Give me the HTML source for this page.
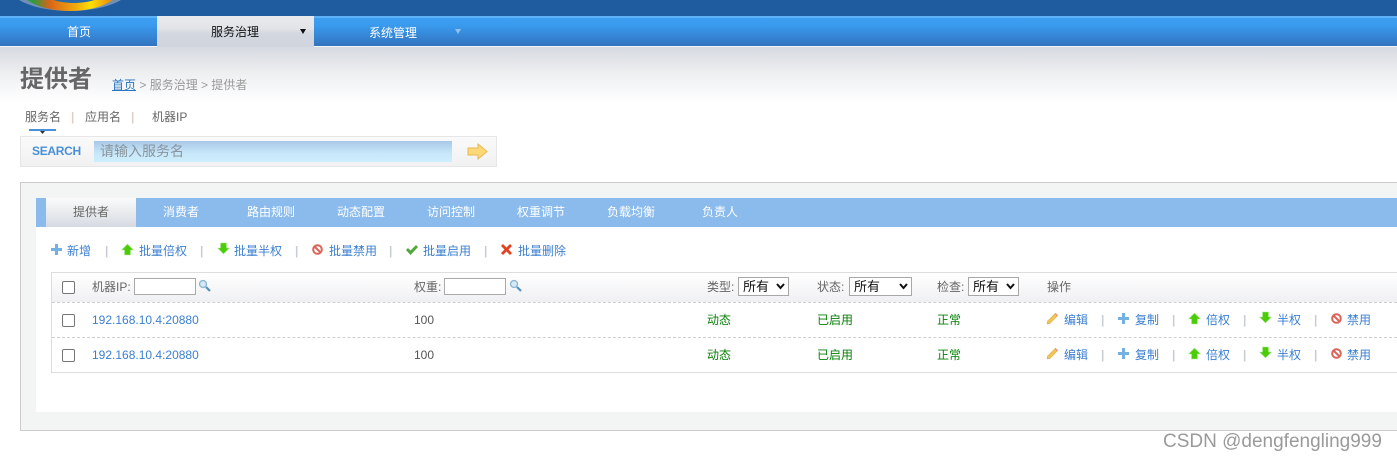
<!DOCTYPE html>
<html><head><meta charset="utf-8">
<style>
*{box-sizing:border-box}
html,body{margin:0;padding:0;width:1397px;height:461px;overflow:hidden;background:#fff}
body{position:relative;font:12px/16px "Liberation Sans","Noto Sans CJK SC",sans-serif;color:#666}
.a{position:absolute}
.t{position:absolute;white-space:nowrap;line-height:16px}
.l{color:#3b7fd0}
.g{color:#088008}
.s{color:#c8ccd4;font-weight:bold}
.h{color:#666}
.i{position:absolute;width:13px;height:13px}
.c{position:absolute;width:13px;height:13px;border:1px solid #767676;border-radius:2px;background:#fff}
.n{position:absolute;height:17px;width:62px;border:1px solid #aaa;background:#fff}
.sel{position:absolute;height:19px;border:1px solid #a8a8a8;background:#fff;color:#111;font-size:13px;line-height:17px;padding-left:4px}
.sel svg{position:absolute;right:3px;top:5px}
.d{position:absolute;left:52px;width:1345px;border-top:1px dashed #cfcfcf}
</style></head><body>
<svg width="0" height="0" style="position:absolute"><defs>
<symbol id="plus" viewBox="0 0 13 13"><path d="M5 1h3v4h4v3H8v4H5V8H1V5h4z" fill="#74b0e0"/></symbol>
<symbol id="up" viewBox="0 0 13 13"><path d="M6.500 1L12.500 7H9.500v5H3.500V7H.5z" fill="#4ccc08" stroke="#b0ec98" stroke-width=".6"/></symbol>
<symbol id="down" viewBox="0 0 13 13"><path d="M3.500 1h6v5h3l-6 6-6-6h3z" fill="#4ccc08" stroke="#b0ec98" stroke-width=".6"/></symbol>
<symbol id="no" viewBox="0 0 13 13"><circle cx="6.500" cy="6.500" r="4.300" fill="#fff" stroke="#d9665a" stroke-width="2"/><path d="M3.500 3.500l6 6" stroke="#d9665a" stroke-width="2"/></symbol>
<symbol id="ok" viewBox="0 0 13 13"><path d="M1 7l2-2 2.500 2.500L11 2l2 2-7.500 8z" fill="#4fa83a"/></symbol>
<symbol id="x" viewBox="0 0 13 13"><path d="M3 1l3.500 3.500L10 1l2 2-3.500 3.500L12 10l-2 2-3.500-3.500L3 12l-2-2 3.500-3.500L1 3z" fill="#e2421f"/></symbol>
<symbol id="pen" viewBox="0 0 13 13"><path d="M9.500 1l2.500 2.500L4 11.500 1 12l.5-3z" fill="#f0c458" stroke="#d8a440" stroke-width=".5"/><path d="M9.500 1l2.500 2.500-1 1L8.500 2z" fill="#e8a090"/></symbol>
<symbol id="mag" viewBox="0 0 13 13"><circle cx="5" cy="5" r="3.500" fill="#d5e8f5" stroke="#8ab4d0" stroke-width="1.300"/><path d="M8 8l4 4" stroke="#4f93c4" stroke-width="2.200"/></symbol>
</defs></svg>

<!-- header -->
<div class="a" style="left:0;top:0;width:1397px;height:16px;background:#1f5c9f"></div>
<div class="a" style="left:8px;top:-40px;width:124px;height:51px;border-radius:50%;background:#6f8fb5"></div>
<div class="a" style="left:18px;top:-40px;width:104px;height:51px;border-radius:50%;background:linear-gradient(90deg,#3a9a40 0,#2f9a3c 15%,#d8641a 30%,#f0a80c 55%,#ffe000 70%,#e88a10 90%,#b8701a 100%)"></div>
<div class="a" style="left:32px;top:-44px;width:84px;height:47px;border-radius:50%;background:#2b6aa8"></div>
<div class="a" style="left:0;top:16px;width:1397px;height:30px;background:linear-gradient(#3d9ff2 0,#3a9bee 25%,#3273bf 100%);border-top:2px solid #5db2f7"></div>
<div class="a" style="left:0;top:46px;width:1397px;height:1px;background:#f4f5f7"></div>
<div class="a" style="left:0;top:47px;width:1397px;height:55px;background:linear-gradient(#d6d9df,#eceef0 45%,#fff)"></div>
<div class="a" style="left:157px;top:16px;width:157px;height:31px;background:linear-gradient(#e9eaed 0,#e2e4e8 40%,#d4d8e0 55%,#cfd4dd 100%)"></div>
<div class="t" style="left:67px;top:24px;color:#fff">首页</div>
<div class="t" style="left:211px;top:24px;color:#111">服务治理</div>
<svg class="a" style="left:300px;top:29px" width="6" height="6"><path d="M0 0h6L3 5z" fill="#111"/></svg>
<div class="t" style="left:369px;top:25px;color:#fff">系统管理</div>
<svg class="a" style="left:455px;top:29px" width="6" height="6"><path d="M0 0h6L3 5z" fill="#8fc0ee"/></svg>

<!-- title -->
<div class="t" style="left:20px;top:66px;font-size:24px;line-height:28px;font-weight:bold;color:#666">提供者</div>
<div class="t" style="left:112px;top:77px;color:#999"><span style="color:#2a76c4;text-decoration:underline">首页</span> &gt; 服务治理 &gt; 提供者</div>

<!-- search tabs -->
<div class="t" style="left:25px;top:109px">服务名</div>
<div class="t s" style="left:71px;top:109px;color:#dccfc8">|</div>
<div class="t" style="left:85px;top:109px">应用名</div>
<div class="t s" style="left:131px;top:109px;color:#dccfc8">|</div>
<div class="t" style="left:152px;top:109px">机器IP</div>
<div class="a" style="left:29px;top:129px;width:27px;height:2px;background:#4a90d9"></div>
<svg class="a" style="left:40px;top:131px" width="5" height="3"><path d="M0 0h5L2.500 3z" fill="#333"/></svg>
<div class="a" style="left:20px;top:136px;width:477px;height:31px;border:1px solid #e6e6e6;background:linear-gradient(#fafafa,#f1f1f1)"></div>
<div class="t" style="left:32px;top:143px;font-weight:bold;color:#4a90d9;letter-spacing:-.3px">SEARCH</div>
<div class="a" style="left:94px;top:141px;width:358px;height:21px;background:linear-gradient(#a8c8e8,#c8e8fa 60%,#cdeefc);padding-left:6px;font-size:14px;line-height:21px;color:#8a949c">请输入服务名</div>
<svg class="a" style="left:467px;top:143px" width="21" height="17"><path d="M1 5h10V1l9 7.500L11 16v-4H1z" fill="#fbd978" stroke="#e8b94f"/></svg>

<!-- panel -->
<div class="a" style="left:20px;top:182px;width:1390px;height:249px;border:1px solid #ccc;background:#f3f4f4"></div>
<div class="a" style="left:36px;top:198px;width:1361px;height:214px;background:#fff"></div>
<div class="a" style="left:36px;top:198px;width:1361px;height:29px;background:#8bbbec"></div>
<div class="a" style="left:46px;top:198px;width:90px;height:29px;background:linear-gradient(#fbfbfb,#d6dae1)"></div>
<div class="t" style="left:73px;top:204px">提供者</div>
<div class="t" style="left:163px;top:204px;color:#fff">消费者</div>
<div class="t" style="left:247px;top:204px;color:#fff">路由规则</div>
<div class="t" style="left:337px;top:204px;color:#fff">动态配置</div>
<div class="t" style="left:427px;top:204px;color:#fff">访问控制</div>
<div class="t" style="left:517px;top:204px;color:#fff">权重调节</div>
<div class="t" style="left:607px;top:204px;color:#fff">负载均衡</div>
<div class="t" style="left:702px;top:204px;color:#fff">负责人</div>

<!-- toolbar -->
<svg class="i" style="left:50px;top:243px"><use href="#plus"/></svg><div class="t l" style="left:67px;top:243px">新增</div><div class="t s" style="left:105px;top:243px">|</div>
<svg class="i" style="left:121px;top:243px"><use href="#up"/></svg><div class="t l" style="left:139px;top:243px">批量倍权</div><div class="t s" style="left:200px;top:243px">|</div>
<svg class="i" style="left:217px;top:242px"><use href="#down"/></svg><div class="t l" style="left:234px;top:243px">批量半权</div><div class="t s" style="left:295px;top:243px">|</div>
<svg class="i" style="left:311px;top:243px"><use href="#no"/></svg><div class="t l" style="left:329px;top:243px">批量禁用</div><div class="t s" style="left:389px;top:243px">|</div>
<svg class="i" style="left:405px;top:243px"><use href="#ok"/></svg><div class="t l" style="left:423px;top:243px">批量启用</div><div class="t s" style="left:484px;top:243px">|</div>
<svg class="i" style="left:500px;top:243px"><use href="#x"/></svg><div class="t l" style="left:518px;top:243px">批量删除</div>

<!-- table -->
<div class="a" style="left:51px;top:272px;width:1360px;height:101px;border:1px solid #ddd;background:#fff"></div>
<div class="a" style="left:52px;top:273px;width:1345px;height:29px;background:linear-gradient(#fff,#eff0f2)"></div>
<div class="d" style="top:302px"></div>
<div class="d" style="top:337px"></div>

<div class="c" style="left:62px;top:281px"></div>
<div class="t h" style="left:92px;top:279px">机器IP:</div>
<div class="n" style="left:134px;top:278px"></div>
<svg class="i" style="left:198px;top:279px"><use href="#mag"/></svg>
<div class="t h" style="left:414px;top:279px">权重:</div>
<div class="n" style="left:444px;top:278px"></div>
<svg class="i" style="left:509px;top:279px"><use href="#mag"/></svg>
<div class="t h" style="left:707px;top:279px">类型:</div>
<div class="sel" style="left:738px;top:277px;width:51px">所有<svg width="9" height="7"><path d="M1 1l3.500 4L8 1" fill="none" stroke="#111" stroke-width="2"/></svg></div>
<div class="t h" style="left:817px;top:279px">状态:</div>
<div class="sel" style="left:849px;top:277px;width:63px">所有<svg width="9" height="7"><path d="M1 1l3.500 4L8 1" fill="none" stroke="#111" stroke-width="2"/></svg></div>
<div class="t h" style="left:937px;top:279px">检查:</div>
<div class="sel" style="left:968px;top:277px;width:51px">所有<svg width="9" height="7"><path d="M1 1l3.500 4L8 1" fill="none" stroke="#111" stroke-width="2"/></svg></div>
<div class="t h" style="left:1047px;top:279px">操作</div>

<!-- row 1 -->
<div class="c" style="left:62px;top:314px"></div>
<div class="t l" style="left:92px;top:312px">192.168.10.4:20880</div>
<div class="t" style="left:414px;top:312px;color:#555">100</div>
<div class="t g" style="left:707px;top:312px">动态</div>
<div class="t g" style="left:817px;top:312px">已启用</div>
<div class="t g" style="left:937px;top:312px">正常</div>
<svg class="i" style="left:1046px;top:312px"><use href="#pen"/></svg><div class="t l" style="left:1064px;top:312px">编辑</div><div class="t s" style="left:1101px;top:312px">|</div>
<svg class="i" style="left:1117px;top:312px"><use href="#plus"/></svg><div class="t l" style="left:1135px;top:312px">复制</div><div class="t s" style="left:1172px;top:312px">|</div>
<svg class="i" style="left:1188px;top:312px"><use href="#up"/></svg><div class="t l" style="left:1206px;top:312px">倍权</div><div class="t s" style="left:1243px;top:312px">|</div>
<svg class="i" style="left:1259px;top:311px"><use href="#down"/></svg><div class="t l" style="left:1277px;top:312px">半权</div><div class="t s" style="left:1314px;top:312px">|</div>
<svg class="i" style="left:1330px;top:312px"><use href="#no"/></svg><div class="t l" style="left:1347px;top:312px">禁用</div>

<!-- row 2 -->
<div class="c" style="left:62px;top:349px"></div>
<div class="t l" style="left:92px;top:347px">192.168.10.4:20880</div>
<div class="t" style="left:414px;top:347px;color:#555">100</div>
<div class="t g" style="left:707px;top:347px">动态</div>
<div class="t g" style="left:817px;top:347px">已启用</div>
<div class="t g" style="left:937px;top:347px">正常</div>
<svg class="i" style="left:1046px;top:347px"><use href="#pen"/></svg><div class="t l" style="left:1064px;top:347px">编辑</div><div class="t s" style="left:1101px;top:347px">|</div>
<svg class="i" style="left:1117px;top:347px"><use href="#plus"/></svg><div class="t l" style="left:1135px;top:347px">复制</div><div class="t s" style="left:1172px;top:347px">|</div>
<svg class="i" style="left:1188px;top:347px"><use href="#up"/></svg><div class="t l" style="left:1206px;top:347px">倍权</div><div class="t s" style="left:1243px;top:347px">|</div>
<svg class="i" style="left:1259px;top:346px"><use href="#down"/></svg><div class="t l" style="left:1277px;top:347px">半权</div><div class="t s" style="left:1314px;top:347px">|</div>
<svg class="i" style="left:1330px;top:347px"><use href="#no"/></svg><div class="t l" style="left:1347px;top:347px">禁用</div>

<!-- watermark -->
<div class="t" style="left:1163px;top:432px;font-size:19px;line-height:20px;color:#9a9a9a">CSDN @dengfengling999</div>
</body></html>
